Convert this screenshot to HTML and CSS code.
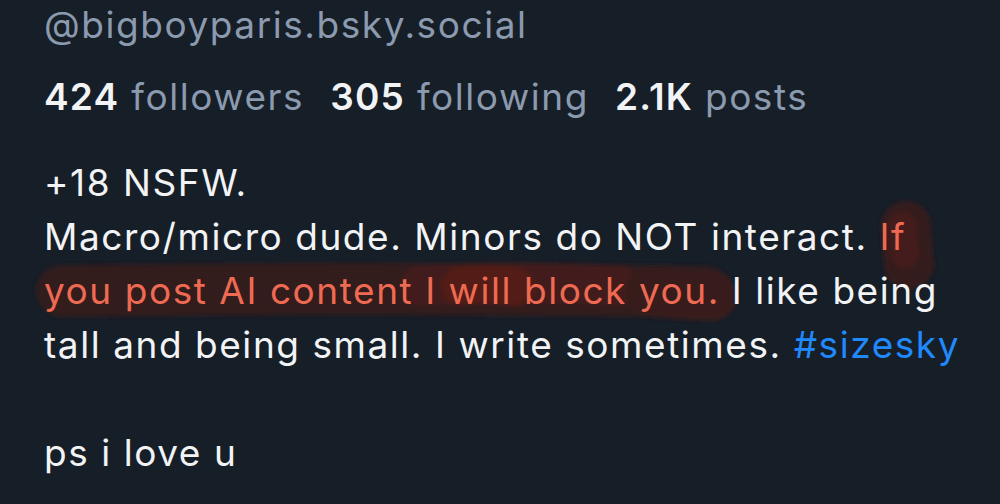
FILE: index.html
```html
<!DOCTYPE html>
<html>
<head>
<meta charset="utf-8">
<link rel="stylesheet" href="styles.css">
</head>
<body>
<div class="profile">
  <svg class="marker" width="1000" height="504" viewBox="0 0 1000 504" aria-hidden="true">
    <defs>
      <filter id="soft" x="-10%" y="-40%" width="120%" height="180%">
        <feGaussianBlur stdDeviation="2"/>
      </filter>
    </defs>
    <g filter="url(#soft)" fill="none" stroke-linecap="round" stroke-linejoin="round">
      <path d="M906 226 C 907 242, 908 256, 909 264" stroke="#351a1d" stroke-width="50"/>
      <path d="M902 226 C 903 238, 904 248, 905 254" stroke="#451a1b" stroke-width="28"/>
      <path d="M62 291 C 220 289, 480 288, 706 292" stroke="#321b1f" stroke-width="52"/>
      <path d="M420 286 C 480 282, 560 282, 620 286" stroke="#431b1c" stroke-width="40"/>
      <path d="M460 286 C 480 284, 500 284, 515 287" stroke="#521b19" stroke-width="38"/>
      <path d="M650 292 C 680 294, 700 296, 712 296" stroke="#381a1d" stroke-width="50"/>
    </g>
  </svg>
  <div class="content">
    <div class="handle">@bigboyparis.bsky.social</div>
    <div class="stats">
      <span class="stat"><b>424</b> followers</span>
      <span class="stat"><b>305</b> following</span>
      <span class="stat"><b>2.1K</b> posts</span>
    </div>
    <p class="bio">+18 NSFW.<br>Macro/micro dude. Minors do NOT interact. <span class="marked">If you post AI content I will block you.</span> I like being tall and being small. I write sometimes. <a class="tag" href="#">#sizesky</a><br><br>ps i love u</p>
  </div>
</div>
</body>
</html>
```

FILE: styles.css
```css
html, body {
  margin: 0;
  padding: 0;
  background: #161e28;
}
body {
  width: 1000px;
  height: 504px;
  overflow: hidden;
  font-family: "Inter", "Noto Sans", sans-serif;
}
.profile {
  position: relative;
  width: 1000px;
  height: 504px;
}
.marker {
  position: absolute;
  left: 0;
  top: 0;
  z-index: 0;
}
.content {
  position: relative;
  z-index: 1;
  padding: 0 30px 0 44px;
  letter-spacing: 1.55px;
}
.handle {
  font-size: 37px;
  line-height: 50px;
  color: #8b9aae;
}
.stats {
  display: flex;
  gap: 26px;
  margin-top: 22px;
  font-size: 37px;
  line-height: 50px;
  color: #8b9aae;
}
.stats b {
  color: #f1f3f5;
  font-weight: 600;
  letter-spacing: 1.2px;
}
.bio {
  margin: 34px 0 0;
  font-size: 37px;
  line-height: 54px;
  color: #f1f3f5;
}
.marked {
  color: #ef6a52;
}
.tag {
  color: #2089fc;
  text-decoration: none;
}
```
